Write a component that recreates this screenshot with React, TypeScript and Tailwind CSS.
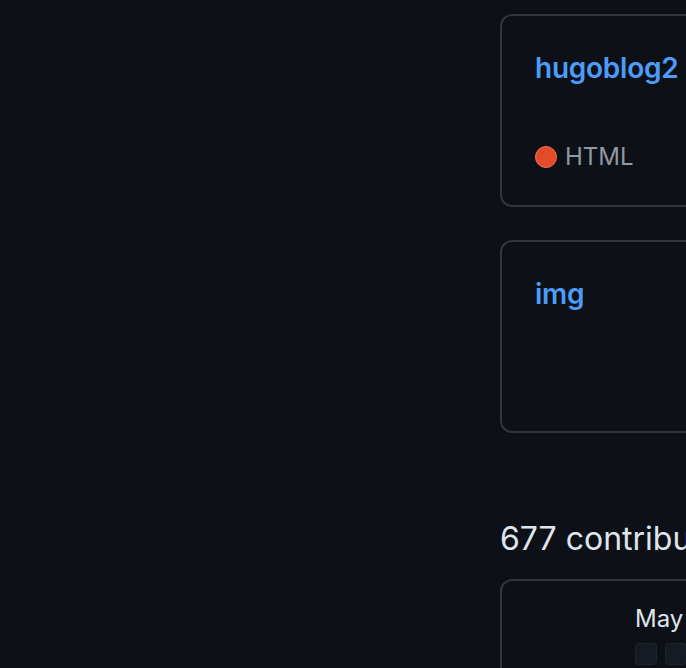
export default function App() {
  const font = { fontFamily: 'Inter, "Noto Sans", sans-serif' };
  return (
    <div className="w-[686px] h-[668px] overflow-hidden bg-[#0d1117]" style={font}>
      <div className="ml-[500px] w-[900px] flex flex-col pt-[14px]">
        <div className="h-[193px] border-2 border-[#30363d] rounded-[12px] pl-[33px] pt-[32px] pb-[30px] flex flex-col justify-between">
          <div className="text-[28px] leading-[40px] font-semibold tracking-[-0.25px] text-[#4c9cf8]">hugoblog2</div>
          <div className="flex items-center gap-[8px] h-[36px]">
            <span className="w-[22px] h-[22px] rounded-full bg-[#e34c26] border border-[#f0705a]" />
            <span className="text-[24px] leading-[36px] text-[#9198a1]">HTML</span>
          </div>
        </div>
        <div className="mt-[33px] h-[193px] border-2 border-[#30363d] rounded-[12px] pl-[33px] pt-[32px]">
          <div className="text-[28px] leading-[40px] font-semibold tracking-[-0.25px] text-[#4c9cf8]">img</div>
        </div>
        <h2 className="mt-[82px] text-[32px] leading-[48px] font-normal text-[#dfe5ec]">677 contributions in the last year</h2>
        <div className="mt-[16px] h-[200px] border-2 border-[#30363d] rounded-[12px] pl-[133px] pt-[26px]">
          <div className="text-[24px] leading-[24px] text-[#dfe5ec]">May</div>
          <div className="mt-[12px] flex gap-[8px]">
            <span className="w-[22px] h-[22px] rounded-[4px] bg-[#151b23] border border-[#1f252d]" />
            <span className="w-[22px] h-[22px] rounded-[4px] bg-[#151b23] border border-[#1f252d]" />
            <span className="w-[22px] h-[22px] rounded-[4px] bg-[#151b23] border border-[#1f252d]" />
          </div>
        </div>
      </div>
    </div>
  );
}
